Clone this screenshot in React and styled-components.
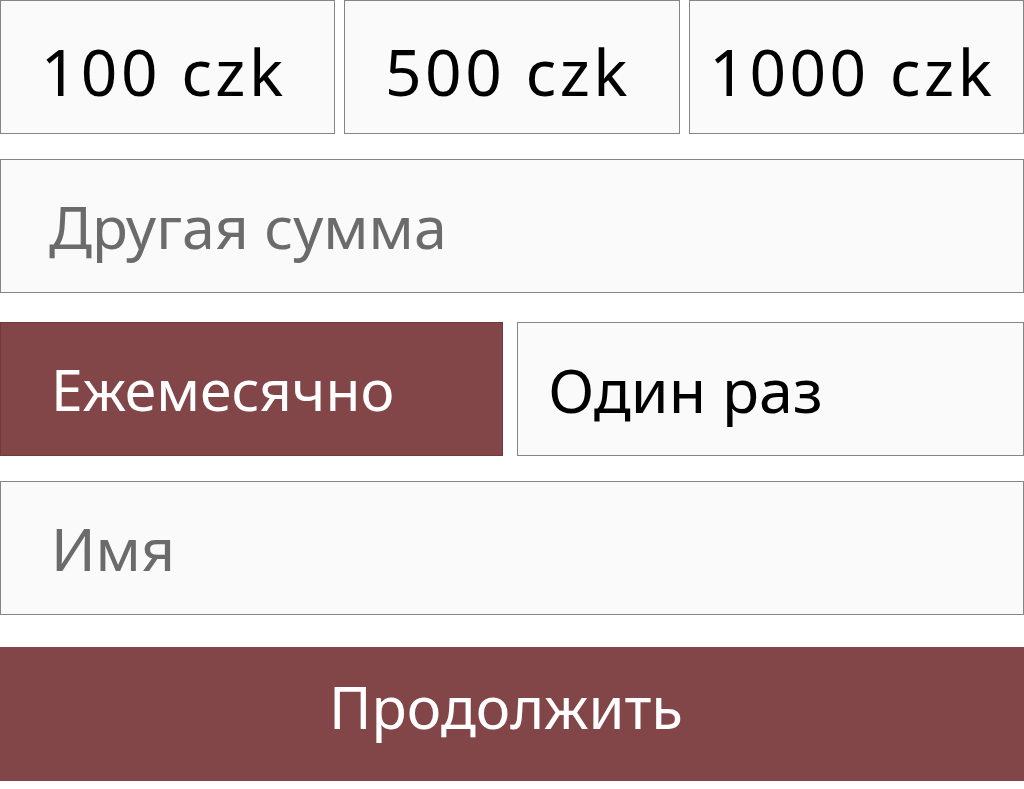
import styled, { createGlobalStyle } from 'styled-components';

const GlobalStyle = createGlobalStyle`
  html, body {
    margin: 0;
    padding: 0;
    background: #ffffff;
  }
  body {
    font-family: "Noto Sans", "Liberation Sans", sans-serif;
  }
`;

const amounts = ['100 czk', '500 czk', '1000 czk'];

const App = () => {
  return (
    <>
      <GlobalStyle />
      <Form>
        <AmountRow>
          {amounts.map((a) => (
            <AmountButton key={a}>{a}</AmountButton>
          ))}
        </AmountRow>

        <Field placeholder="Другая сумма" />

        <PeriodRow>
          <PeriodButton $active $pad={50}>Ежемесячно</PeriodButton>
          <PeriodButton $pad={30} $wide>Один раз</PeriodButton>
        </PeriodRow>

        <Field placeholder="Имя" $pad={50} />

        <SubmitButton>Продолжить</SubmitButton>
      </Form>
    </>
  );
};

const Form = styled.form`
  width: 1024px;
  display: flex;
  flex-direction: column;
  gap: 25px;
`;

const AmountRow = styled.div`
  display: grid;
  grid-template-columns: repeat(3, 1fr);
  gap: 9px;
`;

const Box = styled.button`
  height: 134px;
  box-sizing: border-box;
  border: 1px solid #858585;
  background: #fafafa;
  color: #000000;
  font-family: "Noto Sans", "Liberation Sans", sans-serif;
  font-size: 58px;
  font-weight: 400;
  margin: 0;
  cursor: pointer;
`;

const AmountButton = styled(Box).attrs({ type: 'button' })`
  text-align: center;
  font-size: 64px;
  letter-spacing: 3.5px;
  padding: 8px 8px 0 0;
`;

const Field = styled.input`
  height: 134px;
  box-sizing: border-box;
  width: 100%;
  border: 1px solid #858585;
  background: #fafafa;
  font-family: "Noto Sans", "Liberation Sans", sans-serif;
  font-size: 59px;
  color: #000;
  padding: 0 0 0 ${(p) => p.$pad || 48}px;
  margin: 0;
  outline: none;

  &::placeholder {
    color: #6b6b6b;
    opacity: 1;
  }
`;

const PeriodRow = styled.div`
  display: grid;
  grid-template-columns: 503px 1fr;
  gap: 14px;
  margin-top: 4px;
`;

const PeriodButton = styled(Box).attrs({ type: 'button' })`
  text-align: left;
  padding: 0 0 0 ${(p) => p.$pad}px;
  font-size: ${(p) => (p.$wide ? '61px' : '57px')};
  background: ${(p) => (p.$active ? '#824548' : '#fafafa')};
  color: ${(p) => (p.$active ? '#ffffff' : '#000000')};
  border-color: ${(p) => (p.$active ? '#6f3a3d' : '#858585')};
`;

const SubmitButton = styled(Box).attrs({ type: 'submit' })`
  margin-top: 7px;
  padding: 0 12px 16px 0;
  background: #824548;
  color: #ffffff;
  border: none;
  text-align: center;
`;

export default App;
